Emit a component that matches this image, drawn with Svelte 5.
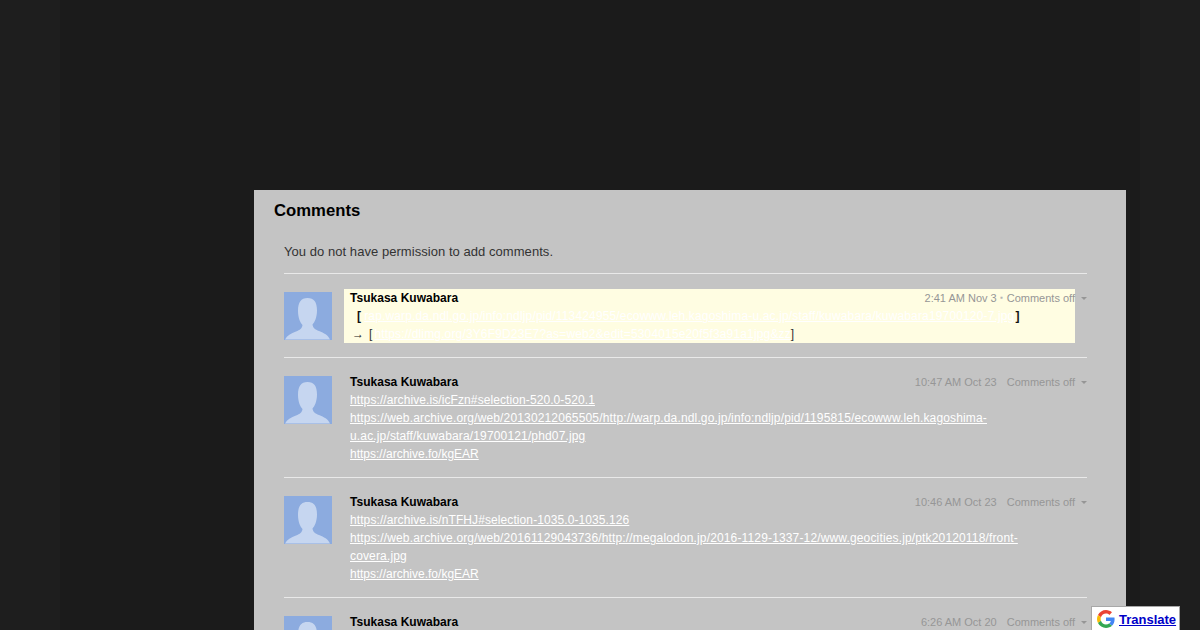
<script>
  const comments = [
    {
      time: "2:41 AM Nov 3",
      fresh: true,
      lines: [],
    },
    {
      time: "10:47 AM Oct 23",
      lines: [
        "https://archive.is/icFzn#selection-520.0-520.1",
        "https://web.archive.org/web/20130212065505/http://warp.da.ndl.go.jp/info:ndljp/pid/1195815/ecowww.leh.kagoshima-u.ac.jp/staff/kuwabara/19700121/phd07.jpg",
        "https://archive.fo/kgEAR",
      ],
    },
    {
      time: "10:46 AM Oct 23",
      lines: [
        "https://archive.is/nTFHJ#selection-1035.0-1035.126",
        "https://web.archive.org/web/20161129043736/http://megalodon.jp/2016-1129-1337-12/www.geocities.jp/ptk20120118/front-covera.jpg",
        "https://archive.fo/kgEAR",
      ],
    },
    {
      time: "6:26 AM Oct 20",
      lines: [],
    },
  ];

  function spacing(line) {
    if (line.length < 30) return "tight";
    return line.length < 60 ? "mid" : "wide";
  }
</script>

{#snippet avatar()}
  <svg class="avatar" viewBox="0 0 48 48" aria-hidden="true">
    <rect width="48" height="48" fill="#8cabdf" />
    <path
      d="M1 47.500c2-4 6-6 11-8 4-1.500 6-3 6.500-6.500-2-2-4.500-7-4.500-14C14 10 17 6 23.500 6S33 10 33 18.500c0 7-2.500 12-4.500 14 .5 3.500 2.500 5 6.500 6.500 5 2 9 4 11 8.500z"
      fill="#c6d6f0"
    />
  </svg>
{/snippet}

<div class="page">
  <div class="column">
    <section class="panel">
      <h2>Comments</h2>
      <div class="inner">
        <p class="notice">You do not have permission to add comments.</p>
        <div class="list">
          {#each comments as c}
            <article class="comment">
              {@render avatar()}
              <div class="content" class:fresh={c.fresh}>
                <div class="head">
                  <span class="name">Tsukasa Kuwabara</span>
                  <span class="meta">
                    <span class="time">{c.time}</span>
                    <span class="sep">{c.fresh ? "▪" : ""}</span>
                    <span>Comments off</span>
                  </span>
                </div>
                <div class="body">
                  {#if c.fresh}
                    <div class="ref wide">
                      <b class="bracket">[</b>
                      <a href="#top">rap.warp.da.ndl.go.jp/info:ndljp/pid/113424955/ecowww.leh.kagoshima-u.ac.jp/staff/kuwabara/kuwabara19700120-7.jpg</a>
                      <b class="bracket">]</b>
                    </div>
                    <div class="ref second wide">
                      <span class="arrow">→</span>
                      <span class="thin">[</span>
                      <a href="#top">https://dlimg.org/3Y6F9D23E7?as=web2&edit=5304015e20f5f3a91a1jpg&zz</a>
                      <span class="thin">]</span>
                    </div>
                  {:else}
                    {#each c.lines as line}
                      <div class={spacing(line)}><a href="#top">{line}</a></div>
                    {/each}
                  {/if}
                </div>
              </div>
              <span class="caret"></span>
            </article>
          {/each}
        </div>
      </div>
    </section>
  </div>
</div>

<div class="translate">
  <svg class="g" viewBox="0 0 48 48" aria-hidden="true">
    <path fill="#ea4335" d="M24 9.500c3.500 0 6.700 1.300 9.100 3.500l6.800-6.800C35.800 2.400 30.300 0 24 0 14.600 0 6.500 5.400 2.600 13.200l7.900 6.200C12.400 13.600 17.700 9.500 24 9.500z" />
    <path fill="#4285f4" d="M46.900 24.500c0-1.600-.1-3.100-.4-4.500H24v9h12.900c-.6 3-2.200 5.500-4.700 7.200l7.700 6c4.500-4.200 7-10.300 7-17.700z" />
    <path fill="#fbbc05" d="M10.500 28.600c-.5-1.400-.8-3-.8-4.600s.3-3.200.8-4.600l-7.900-6.200C.9 16.500 0 20.100 0 24s.9 7.500 2.600 10.800l7.900-6.200z" />
    <path fill="#34a853" d="M24 48c6.500 0 11.900-2.100 15.900-5.800l-7.700-6c-2.200 1.500-4.900 2.300-8.200 2.300-6.300 0-11.600-4.100-13.500-9.900l-7.900 6.200C6.500 42.600 14.600 48 24 48z" />
  </svg>
  <a href="#top">Translate</a>
</div>

<style>
  :global(body) {
    margin: 0;
    background: #1e1e1e;
    overflow: hidden;
  }

  .page {
    height: 630px;
    overflow: hidden;
    background: #1e1e1e;
    font-family: "Liberation Sans", Arial, sans-serif;
  }

  .column {
    width: 1080px;
    height: 630px;
    margin: 0 auto;
    padding: 190px 14px 0 194px;
    box-sizing: border-box;
    background: #1b1b1b;
  }

  .panel {
    height: 440px;
    background: #c4c4c4;
    overflow: hidden;
  }

  h2 {
    margin: 0;
    padding: 11px 20px 0;
    font-size: 16.7px;
    line-height: 20px;
    color: #000;
  }

  .inner {
    padding: 0 39px 0 30px;
  }

  .notice {
    margin: 23px 0 0;
    padding-bottom: 13px;
    font-size: 13px;
    letter-spacing: 0.05px;
    line-height: 16px;
    color: #333;
    border-bottom: 1px solid #e9e9e9;
  }

  .comment {
    display: flex;
    align-items: flex-start;
    padding: 15px 0 14px;
    min-height: 54px;
    border-bottom: 1px solid #e9e9e9;
  }

  .avatar {
    width: 48px;
    height: 48px;
    margin-top: 3px;
    margin-right: 12px;
    flex: none;
  }

  .content {
    width: 731px;
    box-sizing: border-box;
    padding-left: 6px;
    font-size: 12px;
    line-height: 18px;
  }

  .content.fresh {
    background: #fffde2;
  }

  .head {
    display: flex;
    justify-content: space-between;
  }

  .name {
    font-weight: bold;
    letter-spacing: 0.02px;
    color: #000;
  }

  .meta {
    display: flex;
    font-size: 11px;
    color: #969696;
  }

  .sep {
    width: 10px;
    text-align: center;
    font-size: 8px;
    color: #b5b5b5;
  }

  .body {
    padding-right: 50px;
    color: #fff;
  }

  .tight {
    letter-spacing: 0;
  }

  .mid {
    letter-spacing: 0.09px;
  }

  .wide {
    letter-spacing: 0.15px;
  }

  a {
    color: #fff;
    text-decoration: underline;
  }

  .ref {
    display: flex;
    white-space: nowrap;
    color: #222;
  }

  .bracket {
    margin: 0 3px 0 7px;
    color: #111;
    font-size: 12px;
  }

  .bracket:last-child {
    margin: 0 0 0 1px;
  }

  .second .arrow {
    margin: 0 2px;
    width: 15px;
  }

  .second .thin {
    margin-right: 2px;
    color: #333;
  }

  .second .thin:last-child {
    margin: 0;
  }

  .caret {
    width: 0;
    height: 0;
    margin: 8px 0 0 auto;
    border: 3px solid transparent;
    border-top-color: #969696;
    border-bottom: 0;
  }

  .translate {
    position: fixed;
    left: 1091px;
    top: 606px;
    width: 89px;
    height: 26px;
    box-sizing: border-box;
    display: flex;
    align-items: center;
    gap: 4px;
    padding: 0 0 0 5px;
    background: #fff;
    border: 1px solid #a8a8a8;
    font-family: "Liberation Sans", Arial, sans-serif;
    font-size: 13px;
    font-weight: bold;
  }

  .translate a {
    color: #0000c8;
  }

  .g {
    width: 18px;
    height: 18px;
    flex: none;
  }
</style>
